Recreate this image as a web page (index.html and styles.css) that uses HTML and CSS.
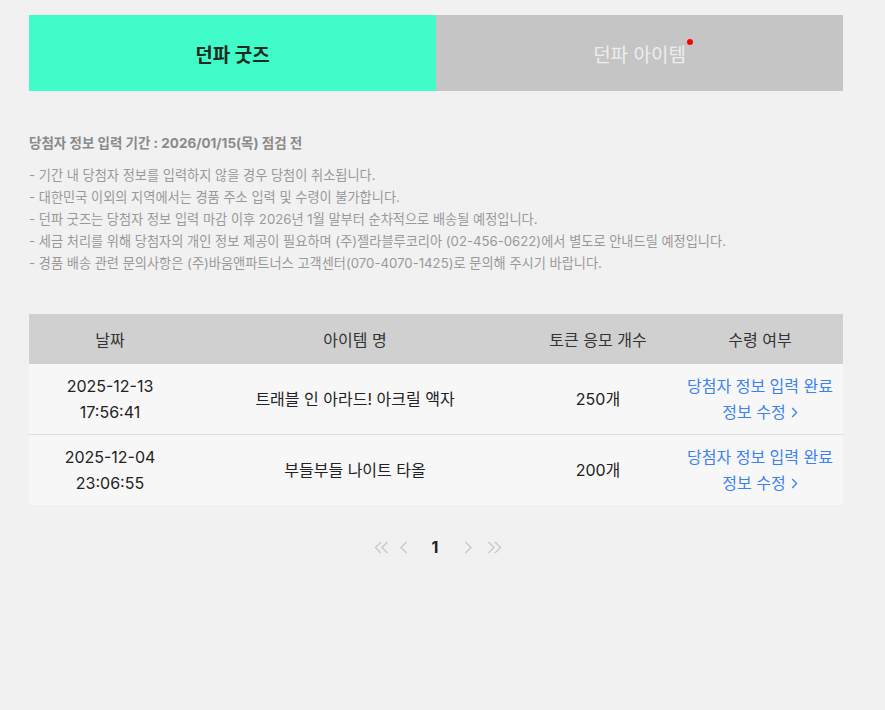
FILE: index.html
```html
<!DOCTYPE html>
<html lang="ko">
<head>
<meta charset="utf-8">
<link rel="stylesheet" href="styles.css">
</head>
<body>
<div class="page">
  <div class="tabs">
    <div class="tab tab-active">던파 굿즈</div>
    <div class="tab tab-off"><span class="tab-label">던파 아이템<span class="dot"></span></span></div>
  </div>

  <div class="notes">
    <p class="notes-title">당첨자 정보 입력 기간 : 2026/01/15(목) 점검 전</p>
    <ul class="notes-list">
      <li>- 기간 내 당첨자 정보를 입력하지 않을 경우 당첨이 취소됩니다.</li>
      <li>- 대한민국 이외의 지역에서는 경품 주소 입력 및 수령이 불가합니다.</li>
      <li>- 던파 굿즈는 당첨자 정보 입력 마감 이후 2026년 1월 말부터 순차적으로 배송될 예정입니다.</li>
      <li>- 세금 처리를 위해 당첨자의 개인 정보 제공이 필요하며 (주)젤라블루코리아 (02-456-0622)에서 별도로 안내드릴 예정입니다.</li>
      <li>- 경품 배송 관련 문의사항은 (주)바움앤파트너스 고객센터(070-4070-1425)로 문의해 주시기 바랍니다.</li>
    </ul>
  </div>

  <table class="list">
    <colgroup>
      <col class="c-date"><col class="c-name"><col class="c-count"><col class="c-status">
    </colgroup>
    <thead>
      <tr><th>날짜</th><th>아이템 명</th><th>토큰 응모 개수</th><th>수령 여부</th></tr>
    </thead>
    <tbody>
      <tr>
        <td>2025-12-13<br>17:56:41</td>
        <td>트래블 인 아라드! 아크릴 액자</td>
        <td>250개</td>
        <td class="status">당첨자 정보 입력 완료<br><span class="edit">정보 수정<svg class="chev" width="7" height="11" viewBox="0 0 7 11"><path d="M1.2 1 L5.6 5.5 L1.2 10" fill="none" stroke="currentColor" stroke-width="1.3"/></svg></span></td>
      </tr>
      <tr>
        <td>2025-12-04<br>23:06:55</td>
        <td>부들부들 나이트 타올</td>
        <td>200개</td>
        <td class="status">당첨자 정보 입력 완료<br><span class="edit">정보 수정<svg class="chev" width="7" height="11" viewBox="0 0 7 11"><path d="M1.2 1 L5.6 5.5 L1.2 10" fill="none" stroke="currentColor" stroke-width="1.3"/></svg></span></td>
      </tr>
    </tbody>
  </table>

  <div class="pager">
    <span class="pg pg-first"><svg width="15" height="13" viewBox="0 0 15 13"><path d="M7 1 L1.5 6.5 L7 12 M13.5 1 L8 6.5 L13.5 12" fill="none" stroke="currentColor" stroke-width="1.4"/></svg></span>
    <span class="pg pg-prev"><svg width="9" height="13" viewBox="0 0 9 13"><path d="M7.5 1 L2 6.5 L7.5 12" fill="none" stroke="currentColor" stroke-width="1.4"/></svg></span>
    <span class="pg pg-num">1</span>
    <span class="pg pg-next"><svg width="9" height="13" viewBox="0 0 9 13"><path d="M1.5 1 L7 6.5 L1.5 12" fill="none" stroke="currentColor" stroke-width="1.4"/></svg></span>
    <span class="pg pg-last"><svg width="15" height="13" viewBox="0 0 15 13"><path d="M1.5 1 L7 6.5 L1.5 12 M8 1 L13.5 6.5 L8 12" fill="none" stroke="currentColor" stroke-width="1.4"/></svg></span>
  </div>
</div>
</body>
</html>
```

FILE: styles.css
```css
html, body {
  margin: 0;
  padding: 0;
  background: #f1f1f1;
  font-family: Inter, "Noto Sans CJK KR", sans-serif;
}

.page {
  width: 814px;
  padding: 15px 0 0 29px;
}

.tabs {
  display: flex;
  height: 76px;
}

.tab {
  flex: 1;
  display: flex;
  align-items: center;
  justify-content: center;
  font-size: 19px;
}

.tab-active {
  background: #40fcc8;
  color: #1f2a1f;
  font-weight: 700;
}

.tab-off {
  background: #c5c5c5;
  color: #eeeeee;
  font-weight: 400;
}

.tab-label {
  position: relative;
}

.dot {
  position: absolute;
  right: -7px;
  top: -1px;
  width: 6px;
  height: 6px;
  border-radius: 50%;
  background: #ff0000;
}

.notes {
  padding-top: 41px;
}

.notes-title {
  margin: 0 0 10px;
  font-size: 13.5px;
  font-weight: 700;
  color: #8a8a8a;
  line-height: 22px;
}

.notes-list {
  list-style: none;
  margin: 0;
  padding: 0;
  font-size: 13.2px;
  color: #999999;
  line-height: 22px;
}

.list {
  margin-top: 40px;
  width: 814px;
  border-collapse: collapse;
  table-layout: fixed;
  font-size: 16px;
  color: #222;
}

.c-date { width: 162px; }
.c-name { width: 328px; }
.c-count { width: 158px; }
.c-status { width: 166px; }

.list th {
  background: #d0d0d0;
  height: 50px;
  padding: 0;
  font-weight: 400;
  color: #333;
}

.list td {
  background: #f7f7f7;
  text-align: center;
  height: 70px;
  padding: 0;
  line-height: 26px;
}

.list tbody tr + tr td {
  border-top: 1px solid #dddddd;
}

.status {
  color: #3b82f0;
}

.edit {
  display: inline-flex;
  align-items: center;
  gap: 5px;
}

.chev {
  display: block;
}

.pager {
  display: flex;
  justify-content: center;
  align-items: center;
  height: 30px;
  margin-top: 27px;
  padding-left: 4px;
  color: #c8c8c8;
}

.pg {
  display: flex;
  align-items: center;
  justify-content: center;
}

.pg-first { margin-right: 10px; }
.pg-prev { margin-right: 24px; }
.pg-num {
  color: #222;
  font-weight: 700;
  font-size: 16px;
  margin-right: 26px;
}
.pg-next { margin-right: 14px; }
```
